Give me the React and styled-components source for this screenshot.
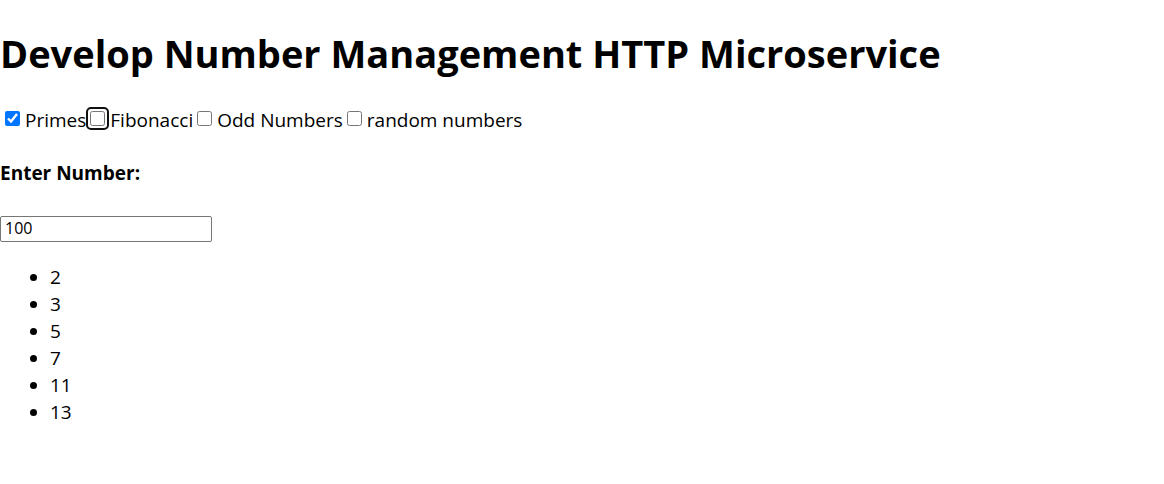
import React, { useState } from "react";
import styled, { createGlobalStyle } from "styled-components";

const GlobalStyle = createGlobalStyle`
  body {
    margin: 0;
    background: #fff;
    color: #000;
    font-family: "Open Sans", "Segoe UI", sans-serif;
    font-size: 19px;
    line-height: 27px;
  }
`;

const Page = styled.main`
  display: flex;
  flex-direction: column;
  align-items: flex-start;
  padding-top: 26px;
`;

const Title = styled.h1`
  margin: 0 0 27px;
  font-size: 38px;
  line-height: 54px;
  font-weight: 700;
`;

const Options = styled.div`
  display: flex;
  flex-wrap: wrap;
  padding-left: 1px;
`;

const Option = styled.label`
  display: flex;
  align-items: center;
`;

const CheckFrame = styled.span`
  display: flex;
  margin: 0 5px 4px 4px;
  border-radius: 1px;
  outline: ${(p) => (p.$current ? "2px solid #101010" : "none")};
  outline-offset: 2px;
`;

const Checkbox = styled.input`
  width: 15px;
  height: 15px;
  margin: 0;
  outline: none;
`;

const FieldLabel = styled.label`
  margin: 26px 0 29px;
  font-weight: 700;
`;

const NumberInput = styled.input`
  box-sizing: border-box;
  width: 212px;
  height: 26px;
  padding: 0 4px 2px;
  border: 1px solid #767676;
  border-radius: 2px;
  font-family: "Open Sans", "Segoe UI", sans-serif;
  font-size: 16px;
`;

const Results = styled.ul`
  margin: 22px 0;
  padding-left: 50px;
`;

const kinds = ["Primes", "Fibonacci", "Odd Numbers", "random numbers"];
const numbers = [2, 3, 5, 7, 11, 13];

export default function App() {
  const [checked, setChecked] = useState(["Primes"]);
  const [current, setCurrent] = useState("Fibonacci");
  const [limit, setLimit] = useState("100");

  const toggle = (kind) => {
    setChecked((list) =>
      list.includes(kind) ? list.filter((k) => k !== kind) : [...list, kind]
    );
  };

  return (
    <>
      <GlobalStyle />
      <Page>
        <Title>Develop Number Management HTTP Microservice</Title>
        <Options>
          {kinds.map((kind) => (
            <Option key={kind}>
              <CheckFrame $current={current === kind}>
                <Checkbox
                  type="checkbox"
                  checked={checked.includes(kind)}
                  onFocus={() => setCurrent(kind)}
                  onChange={() => toggle(kind)}
                />
              </CheckFrame>
              {kind}
            </Option>
          ))}
        </Options>
        <FieldLabel htmlFor="limit">Enter Number:</FieldLabel>
        <NumberInput
          id="limit"
          type="text"
          value={limit}
          onChange={(e) => setLimit(e.target.value)}
        />
        <Results>
          {numbers.map((n) => (
            <li key={n}>{n}</li>
          ))}
        </Results>
      </Page>
    </>
  );
}
